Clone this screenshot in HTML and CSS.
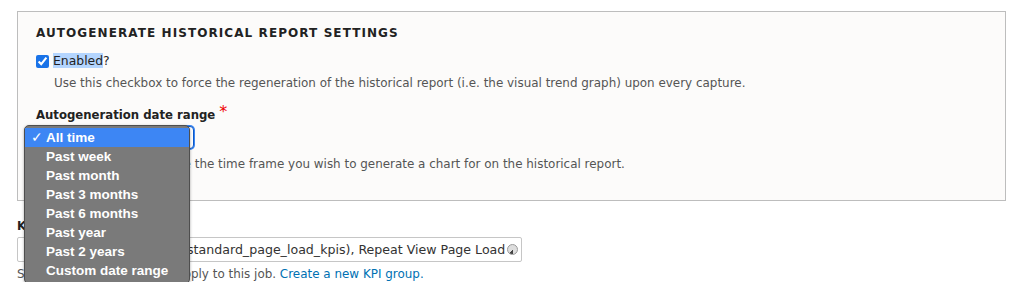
FILE: index.html
```html
<!DOCTYPE html>
<html lang="en">
<head>
    <meta charset="UTF-8" />
    <title>Job settings</title>
    <link rel="stylesheet" href="styles.css">
</head>
<body>

<div class="page">
    <div class="details">
        <div class="details-title">Autogenerate historical report settings</div>

        <div class="form-item checkbox-item">
            <label class="check-label">
                <input type="checkbox" checked />
                <span><span class="selected-text">Enabled</span>?</span>
            </label>
            <div class="description indented">Use this checkbox to force the regeneration of the historical report (i.e. the visual trend graph) upon every capture.</div>
        </div>

        <div class="form-item select-item">
            <label class="field-label">Autogeneration date range <span class="required">*</span></label>
            <div class="select-box">All time</div>
            <div class="description">Use this setting to choose the time frame you wish to generate a chart for on the historical report.</div>

            <ul class="select-menu">
                <li class="active"><span class="tick">&#10003;</span>All time</li>
                <li>Past week</li>
                <li>Past month</li>
                <li>Past 3 months</li>
                <li>Past 6 months</li>
                <li>Past year</li>
                <li>Past 2 years</li>
                <li>Custom date range</li>
            </ul>
        </div>
    </div>

    <div class="form-item kpi-item">
        <label class="field-label">KPI groups</label>
        <div class="text-input">
            <span class="input-value">First View Page Load (standard_page_load_kpis), Repeat View Page Load (standard_page_load_kpis)</span>
            <span class="throbber"></span>
        </div>
        <div class="description">Select the KPI groups that apply to this job. <a href="#">Create a new KPI group.</a></div>
    </div>
</div>

</body>
</html>
```

FILE: styles.css
```css
body {
    margin: 0;
    background: #fff;
    font-family: "DejaVu Sans", Verdana, sans-serif;
    font-size: 12px;
    color: #333;
}

.page {
    padding: 11px 25px 0 17px;
}

.details {
    border: 1px solid #bdbdbd;
    background: #fcfbfa;
    padding: 14px 18px 0 18px;
    height: 174px;
}

.details-title {
    font-size: 12px;
    font-weight: bold;
    text-transform: uppercase;
    letter-spacing: 0.09em;
    color: #222;
    line-height: 15px;
}

.form-item {
    position: relative;
}

.checkbox-item {
    margin-top: 12px;
}

.check-label {
    display: flex;
    align-items: center;
    gap: 4px;
    font-size: 12.4px;
    color: #222;
    line-height: 16px;
}

.check-label input {
    margin: 0;
    width: 13px;
    height: 13px;
    accent-color: #1a73e8;
}

.selected-text {
    background: #b4d5fe;
}

.description {
    font-size: 11.95px;
    color: #555;
    line-height: 16px;
    margin-top: 6px;
}

.indented {
    margin-left: 18px;
}

.select-item {
    margin-top: 16px;
}

.field-label {
    display: block;
    font-weight: bold;
    font-size: 11.7px;
    color: #222;
    line-height: 16px;
}

.required {
    color: #e00;
    font-size: 16px;
    font-weight: normal;
    vertical-align: top;
    line-height: 10px;
}

.select-box {
    margin-top: 3px;
    width: 156px;
    height: 21px;
    border: 1px solid #0a58ca;
    border-radius: 4px;
    background: #fff;
    box-shadow: 0 0 0 1px #3b86f0;
}

.select-item .description {
    margin-top: 7px;
}

.select-menu {
    position: absolute;
    z-index: 10;
    left: -12px;
    top: 18px;
    width: 164px;
    margin: 0;
    padding: 2px 0 3px;
    list-style: none;
    background: #7a7a7a;
    border: 1px solid #4e4e4e;
    border-radius: 5px;
    box-shadow: 0 1px 3px rgba(0, 0, 0, 0.35);
    font-family: "Liberation Sans", Arial, sans-serif;
    font-weight: bold;
    font-size: 13.5px;
    color: #fff;
}

.select-menu li {
    height: 19px;
    line-height: 19px;
    padding-left: 21px;
    position: relative;
}

.select-menu li.active {
    background: #3d86f4;
}

.tick {
    position: absolute;
    left: 6px;
    font-weight: normal;
}

.kpi-item {
    margin-top: 17px;
}

.text-input {
    margin-top: 3px;
    width: 490px;
    height: 23px;
    border: 1px solid #c6c6c6;
    border-radius: 2px;
    background: #fff;
    display: flex;
    align-items: center;
    overflow: hidden;
    position: relative;
    padding-right: 13px;
}

.input-value {
    flex: 1;
    white-space: nowrap;
    overflow: hidden;
    font-size: 12.6px;
    color: #333;
    padding-left: 31px;
}

.throbber {
    position: absolute;
    right: 3px;
    top: 6px;
    width: 9px;
    height: 9px;
    border-radius: 50%;
    border: 1px solid #999;
    background: conic-gradient(#ddd 0 50%, #444 50% 62%, #ddd 62% 100%);
}

.kpi-item .description {
    margin-top: 4px;
}

a {
    color: #0071b3;
    text-decoration: none;
}
```
